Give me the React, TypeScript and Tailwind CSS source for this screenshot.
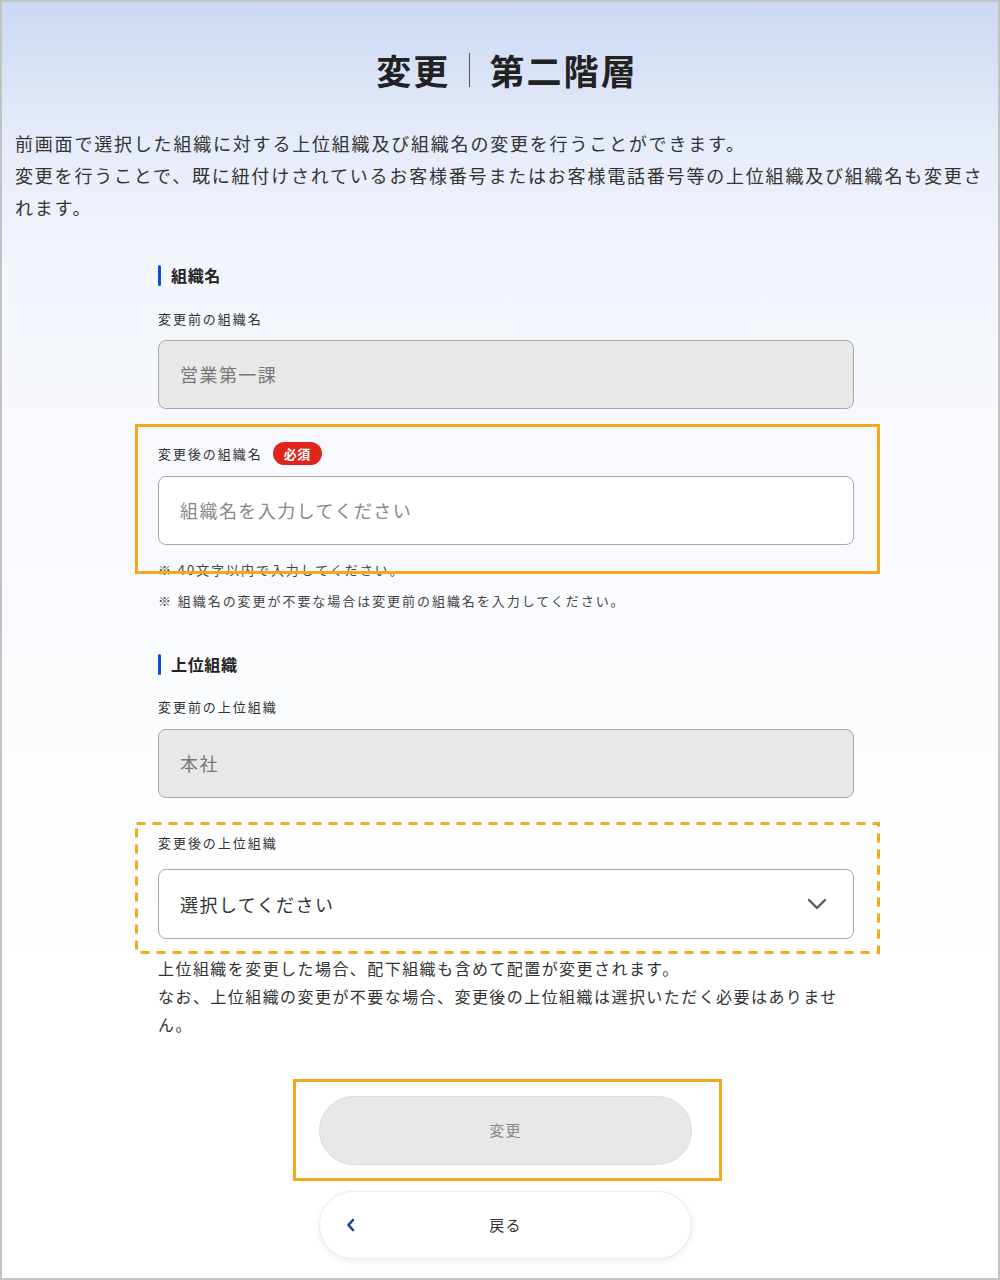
import React from 'react';

const font = { fontFamily: '"Noto Sans CJK JP", "Noto Sans", sans-serif' };

const SectionHeading: React.FC<{ children: React.ReactNode }> = ({ children }) => (
    <div className="flex items-center h-[24px]">
        <span className="w-[3px] h-[21px] bg-[#0b4fd6] rounded-sm mr-[10px]"></span>
        <span className="text-[16px] font-bold text-[#222] tracking-[0.04em]">{children}</span>
    </div>
);

const Label: React.FC<{ children: React.ReactNode }> = ({ children }) => (
    <span className="text-[13px] leading-[20px] tracking-[0.15em] text-[#333]">{children}</span>
);

// dashed annotation frame
const DashedFrame: React.FC<{ className: string }> = ({ className }) => (
    <svg className={`absolute pointer-events-none ${className}`} width="100%" height="100%" preserveAspectRatio="none">
        <rect x="1.5" y="1.5" width="calc(100% - 3px)" height="calc(100% - 3px)" fill="none" stroke="#f4a81d" strokeWidth="3" strokeDasharray="9 7" />
    </svg>
);

const App: React.FC = () => {
    return (
        <div style={font} className="w-[1000px] h-[1280px] border-2 border-[#c2c2c2] bg-[linear-gradient(180deg,#cbd8f4_0%,#e4eaf8_10%,#f2f5fc_20%,#f7f9fd_35%,#fbfcfe_55%,#ffffff_75%)] overflow-hidden">
            {/* title */}
            <div className="pt-[46px] pl-[14px] flex items-center justify-center">
                <h1 className="text-[35px] leading-[44px] font-bold text-[#222] tracking-[0.06em] flex items-center">
                    <span>変更</span>
                    <span className="inline-block w-px h-[34px] bg-[#555] mx-[19px]"></span>
                    <span>第二階層</span>
                </h1>
            </div>

            <div className="mt-[35px] pl-[13px] pr-[8px] text-[18px] leading-[32px] tracking-[0.1em] text-[#333]">
                <p>前画面で選択した組織に対する上位組織及び組織名の変更を行うことができます。</p>
                <p>変更を行うことで、既に紐付けされているお客様番号またはお客様電話番号等の上位組織及び組織名も変更されます。</p>
            </div>

            <div className="w-[696px] ml-[156px] mt-[40px]">
                <SectionHeading>組織名</SectionHeading>

                <div className="mt-[22px] flex flex-col">
                    <Label>変更前の組織名</Label>
                    <div className="mt-[11px] h-[69px] rounded-[8px] border border-[#a8a8a8] bg-[#e8e8e8] flex items-center px-[21px] text-[18px] tracking-[0.08em] text-[#777]">
                        営業第一課
                    </div>
                </div>

                <div className="relative mt-[33px] flex flex-col">
                    <div className="flex items-center h-[23px]">
                        <Label>変更後の組織名</Label>
                        <span className="ml-[10px] h-[23px] px-[11px] rounded-full bg-[#e0261c] text-white text-[13px] font-bold tracking-[0.05em] flex items-center">必須</span>
                    </div>
                    <div className="mt-[11px] h-[69px] rounded-[8px] border border-[#a8a8a8] bg-white flex items-center px-[21px] text-[18px] tracking-[0.08em] text-[#888]">
                        組織名を入力してください
                    </div>
                    <div className="absolute -left-[23px] -right-[26px] -top-[18px] -bottom-[29px] border-[3px] border-[#f4a81d] pointer-events-none"></div>
                </div>

                <div className="mt-[15px] text-[13px] leading-[20px] tracking-[0.15em] text-[#444]">
                    <p>※ 40文字以内で入力してください。</p>
                    <p className="mt-[11px]">※ 組織名の変更が不要な場合は変更前の組織名を入力してください。</p>
                </div>

                <div className="mt-[41px]">
                    <SectionHeading>上位組織</SectionHeading>
                </div>

                <div className="mt-[21px] flex flex-col">
                    <Label>変更前の上位組織</Label>
                    <div className="mt-[12px] h-[69px] rounded-[8px] border border-[#a8a8a8] bg-[#e8e8e8] flex items-center px-[21px] text-[18px] tracking-[0.08em] text-[#777]">
                        本社
                    </div>
                </div>

                <div className="relative mt-[35px] flex flex-col">
                    <Label>変更後の上位組織</Label>
                    <div className="mt-[16px] h-[70px] rounded-[8px] border border-[#a8a8a8] bg-white flex items-center justify-between pl-[21px] pr-[26px] text-[18px] tracking-[0.08em] text-[#333]">
                        <span>選択してください</span>
                        <svg width="20" height="12" viewBox="0 0 20 12" fill="none">
                            <path d="M2 2 L10 10 L18 2" stroke="#555" strokeWidth="2.2" strokeLinecap="round" strokeLinejoin="round" />
                        </svg>
                    </div>
                    <DashedFrame className="-left-[23px] -top-[11px] w-[745px] h-[132px]" />
                </div>

                <div className="mt-[15px] text-[16px] leading-[28px] tracking-[0.09em] text-[#333]">
                    <p>上位組織を変更した場合、配下組織も含めて配置が変更されます。</p>
                    <p>なお、上位組織の変更が不要な場合、変更後の上位組織は選択いただく必要はありません。</p>
                </div>
            </div>

            <div className="mt-[58px] pl-[11px] flex flex-col items-center">
                <div className="relative">
                    <button className="w-[373px] h-[69px] rounded-full bg-[#e8e8e8] border border-[#dcdcdc] text-[15px] tracking-[0.08em] text-[#888]">
                        変更
                    </button>
                    <div className="absolute -left-[26px] -right-[30px] -top-[17px] -bottom-[16px] border-[3px] border-[#f4a81d] pointer-events-none"></div>
                </div>
                <button className="mt-[26px] w-[373px] h-[68px] rounded-full bg-white border border-[#ececec] shadow-[0_2px_6px_rgba(0,0,0,0.08)] relative flex items-center justify-center text-[15px] tracking-[0.08em] text-[#333]">
                    <svg className="absolute left-[26px]" width="10" height="14" viewBox="0 0 10 14" fill="none">
                        <path d="M7 2 L2.5 7 L7 12" stroke="#1d3f9e" strokeWidth="2.6" strokeLinecap="round" strokeLinejoin="round" />
                    </svg>
                    戻る
                </button>
            </div>
        </div>
    );
};

export default App;
